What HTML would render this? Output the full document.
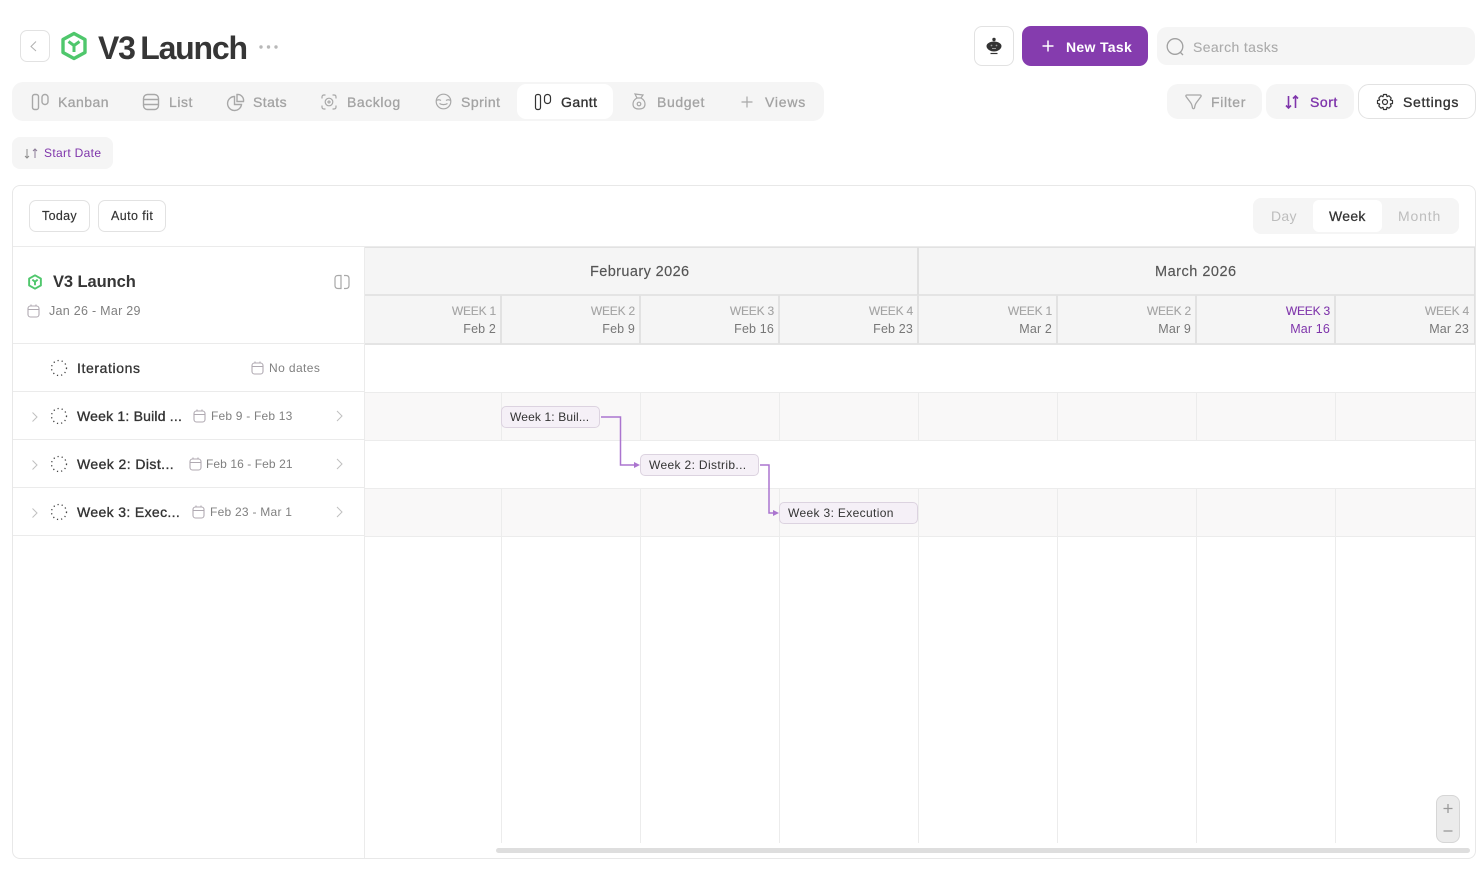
<!DOCTYPE html>
<html lang="en"><head><meta charset="utf-8"><title>V3 Launch</title>
<style>
*{box-sizing:border-box}
html,body{margin:0;padding:0;width:1484px;height:870px;overflow:hidden;background:#fff;font-family:"Liberation Sans",sans-serif;color:#333}
.a{position:absolute}
.t{position:absolute;white-space:nowrap;line-height:18px}
svg{position:absolute;overflow:visible;fill:none}
.tab{font-size:14px;color:#a3a3a3;letter-spacing:.5px;-webkit-text-stroke:.3px currentColor}
.hw{font-size:12px;color:#a3a3a3;text-align:right;letter-spacing:-.2px;line-height:14px;-webkit-text-stroke:.1px currentColor}
.hd{font-size:12.5px;color:#777;text-align:right;letter-spacing:.15px;line-height:14px}
.row{font-size:14px;color:#333;letter-spacing:.4px;-webkit-text-stroke:.35px #333}
.dt{font-size:12px;color:#808080;letter-spacing:.2px}
.bar{position:absolute;height:22px;background:#f5f0f7;border:1px solid #dcd3e0;border-radius:5px;font-size:12px;line-height:20px;padding-left:8px;color:#333;letter-spacing:.35px;white-space:nowrap}
</style></head><body>

<!-- top header -->
<div class="a" style="left:20px;top:30px;width:30px;height:32px;border:1px solid #e2e2e2;border-radius:7px"></div>
<svg style="left:20px;top:30px" width="30" height="32" stroke="#b0b0b0" stroke-width="1"><path d="M16 11.500L11 16.500L16 21"/></svg>
<svg style="left:60px;top:31px" width="28" height="30" viewBox="0 0 28 30" stroke="#4fc76c" stroke-width="3.400" stroke-linejoin="round"><path d="M14 2.500L25 8.500V21.500L14 27.500L3 21.500V8.500Z"/><path d="M8.500 10.500L14 14.500L19.500 10.500M14 14.500V21" stroke-width="3"/></svg>
<div class="t" style="left:98px;top:29px;font-size:32px;line-height:38px;font-weight:bold;letter-spacing:-1.200px;word-spacing:-2.200px;color:#363636">V3 Launch</div>
<svg style="left:259px;top:44px" width="20" height="6"><circle cx="2" cy="3" r="1.700" fill="#b8b8b8"/><circle cx="9.500" cy="3" r="1.700" fill="#b8b8b8"/><circle cx="17" cy="3" r="1.700" fill="#b8b8b8"/></svg>

<div class="a" style="left:974px;top:26px;width:40px;height:40px;border:1px solid #e2e2e2;border-radius:8px"></div>
<svg style="left:984px;top:36px" width="20" height="20" viewBox="0 0 20 20"><circle cx="10" cy="3.500" r="1.700" fill="#333"/><path d="M2.500 10C2.500 7.500 6 5.500 10 5.500s7.500 2 7.500 4.500c0 3-3.500 5.500-7.500 5.500S2.500 13 2.500 10z" fill="#333"/><circle cx="7.500" cy="9.500" r=".9" fill="#999"/><circle cx="12.500" cy="9.500" r=".9" fill="#999"/><path d="M8 12.500h4" stroke="#999" stroke-width="1"/><path d="M6.500 17.500h7" stroke="#333" stroke-width="1.200"/></svg>
<div class="a" style="left:1022px;top:26px;width:126px;height:40px;background:#853cae;border-radius:9px"></div>
<svg style="left:1041px;top:39px" width="14" height="14" stroke="#fff" stroke-width="1.500"><path d="M7 1.500V12.500M1.500 7H12.500"/></svg>
<div class="t" style="left:1066px;top:38px;font-size:14px;font-weight:bold;color:#fff;letter-spacing:.32px">New Task</div>
<div class="a" style="left:1157px;top:27px;width:318px;height:38px;background:#f5f5f5;border-radius:10px"></div>
<svg style="left:1165px;top:37px" width="20" height="20" stroke="#a0a0a0" stroke-width="1.300"><circle cx="10" cy="9.500" r="7.800"/><path d="M15.500 15.500L18 18"/></svg>
<div class="t" style="left:1193px;top:38px;font-size:14px;color:#ababab;letter-spacing:.38px;-webkit-text-stroke:.1px #ababab">Search tasks</div>

<!-- tabs -->
<div class="a" style="left:12px;top:82px;width:812px;height:39px;background:#f5f5f5;border-radius:11px"></div>
<div class="a" style="left:517px;top:84px;width:96px;height:35px;background:#fff;border-radius:9px"></div>
<svg style="left:31px;top:93px" width="18" height="17" stroke="#a8a8a8" stroke-width="1.400"><rect x="1.500" y="1.500" width="6" height="15" rx="2"/><rect x="11" y="1.500" width="6" height="10" rx="2.800"/></svg>
<div class="t tab" style="left:58px;top:93px;letter-spacing:.45px">Kanban</div>
<svg style="left:142px;top:93px" width="18" height="17" stroke="#a8a8a8" stroke-width="1.400"><rect x="1.500" y="1.500" width="15" height="15" rx="4"/><path d="M1.500 6.500H16.500M1.500 11.500H16.500"/></svg>
<div class="t tab" style="left:169px;top:93px;letter-spacing:.55px">List</div>
<svg style="left:227px;top:93px" width="18" height="17" stroke="#a8a8a8" stroke-width="1.400"><path d="M7.500 3.500A7 7 0 1 0 14.500 11.500H7.500Z"/><path d="M10 1.500A6 6 0 0 1 16.500 8.500H10Z"/></svg>
<div class="t tab" style="left:253px;top:93px;letter-spacing:.42px">Stats</div>
<svg style="left:321px;top:94px" width="16" height="16" stroke="#a8a8a8" stroke-width="1.200"><path d="M1 4.500V3Q1 1 3 1H4.500M11.500 1H13Q15 1 15 3V4.500M15 11.500V13Q15 15 13 15H11.500M4.500 15H3Q1 15 1 13V11.500"/><circle cx="8" cy="8" r="3.800"/><path d="M6.200 8H9.800M8 6.200V9.800"/></svg>
<div class="t tab" style="left:347px;top:93px;letter-spacing:.55px">Backlog</div>
<svg style="left:435px;top:93px" width="17" height="17" stroke="#a8a8a8" stroke-width="1.200"><circle cx="8.500" cy="8.500" r="7.300"/><path d="M1.500 7.500C3 6.500 4.500 6.500 6 7.500M11 7.500C12.500 6.500 14 6.500 15.500 7.500M4.500 10.500C6.500 12 10.500 12 12.500 10.500"/></svg>
<div class="t tab" style="left:461px;top:93px">Sprint</div>
<svg style="left:534px;top:93px" width="18" height="17" stroke="#333" stroke-width="1.200"><rect x="1.500" y="1.500" width="5" height="15" rx="2"/><rect x="10.500" y="1.500" width="6" height="9" rx="2.800"/></svg>
<div class="t tab" style="left:561px;top:93px;color:#333;letter-spacing:.45px;-webkit-text-stroke:.35px #333">Gantt</div>
<svg style="left:632px;top:93px" width="14" height="17" stroke="#a8a8a8" stroke-width="1.200"><path d="M3 1L11 2L9 5H5Z"/><path d="M5 5C1.500 7 1 9 1 11C1 14.500 3.500 16 7 16S13 14.500 13 11C13 9 12.500 7 9 5"/><circle cx="7" cy="11" r="1.800"/></svg>
<div class="t tab" style="left:657px;top:93px;letter-spacing:.6px">Budget</div>
<svg style="left:740px;top:95px" width="14" height="14" stroke="#a8a8a8" stroke-width="1.200"><path d="M7 1.500V12.500M1.500 7H12.500"/></svg>
<div class="t tab" style="left:765px;top:93px;letter-spacing:.8px">Views</div>

<div class="a" style="left:1167px;top:84px;width:95px;height:35px;background:#f5f5f5;border-radius:11px"></div>
<svg style="left:1185px;top:94px" width="17" height="16" stroke="#a8a8a8" stroke-width="1.300" stroke-linejoin="round"><path d="M2 1H15Q16.500 1 16 2.500L11.500 8.500Q10 10.500 9.500 14Q8.500 15.500 7.500 14Q7 10.500 5.500 8.500L1 2.500Q.5 1 2 1Z"/></svg>
<div class="t tab" style="left:1211px;top:93px;letter-spacing:.65px">Filter</div>
<div class="a" style="left:1266px;top:84px;width:88px;height:35px;background:#f5f5f5;border-radius:11px"></div>
<svg style="left:1285px;top:95px" width="14" height="14" stroke="#7f35ab" stroke-width="1.600"><path d="M3.500 1V13M1 10.500L3.500 13L6 10.500M10.500 13V1M8 3.500L10.500 1L13 3.500"/></svg>
<div class="t tab" style="left:1310px;top:93px;color:#7f35ab;letter-spacing:.55px;-webkit-text-stroke:.35px #7f35ab">Sort</div>
<div class="a" style="left:1358px;top:84px;width:118px;height:35px;border:1px solid #e2e2e2;border-radius:11px"></div>
<svg style="left:1376px;top:93px" width="18" height="18" viewBox="0 0 18 18" stroke="#333" stroke-width="1.200" stroke-linejoin="round"><circle cx="9" cy="9" r="2.500"/><path d="M7.500 1.500H10.500L11 3.700L13 2.800L15.200 5L14.300 7L16.500 7.500V10.500L14.300 11L15.200 13L13 15.200L11 14.300L10.500 16.500H7.500L7 14.300L5 15.200L2.800 13L3.700 11L1.500 10.500V7.500L3.700 7L2.800 5L5 2.800L7 3.700Z"/></svg>
<div class="t tab" style="left:1403px;top:93px;color:#333;letter-spacing:.68px;-webkit-text-stroke:.35px #333">Settings</div>

<!-- sort chip -->
<div class="a" style="left:12px;top:137px;width:101px;height:32px;background:#f5f5f5;border-radius:8px"></div>
<svg style="left:24px;top:148px" width="14" height="11" stroke="#8a8a8a" stroke-width="1"><path d="M3 1V10M1 8L3 10L5 8"/><path d="M11 10V1M9 3L11 1L13 3" stroke="#8a7a96"/></svg>
<div class="t" style="left:44px;top:144px;font-size:12px;color:#7f35ab;letter-spacing:.33px">Start Date</div>

<!-- main panel -->
<div class="a" style="left:12px;top:185px;width:1464px;height:674px;border:1px solid #e8e8e8;border-radius:8px"></div>
<div class="a" style="left:29px;top:200px;width:61px;height:32px;border:1px solid #e2e2e2;border-radius:7px"></div>
<div class="t" style="left:42px;top:207px;font-size:12.500px;color:#333;letter-spacing:.32px;-webkit-text-stroke:.15px #333">Today</div>
<div class="a" style="left:98px;top:200px;width:68px;height:32px;border:1px solid #e2e2e2;border-radius:7px"></div>
<div class="t" style="left:111px;top:207px;font-size:12.500px;color:#333;letter-spacing:.42px;-webkit-text-stroke:.15px #333">Auto fit</div>
<div class="a" style="left:1253px;top:198px;width:206px;height:36px;background:#f5f5f5;border-radius:8px"></div>
<div class="a" style="left:1313px;top:200px;width:69px;height:32px;background:#fff;border-radius:6px"></div>
<div class="t" style="left:1271px;top:207px;font-size:14px;color:#bdbdbd;letter-spacing:.3px">Day</div>
<div class="t" style="left:1329px;top:207px;font-size:14px;color:#333;letter-spacing:.3px;-webkit-text-stroke:.25px #333">Week</div>
<div class="t" style="left:1398px;top:207px;font-size:14px;color:#bdbdbd;letter-spacing:.85px">Month</div>

<div class="a" style="left:13px;top:246px;width:1462px;height:1px;background:#ebebeb"></div>

<!-- left column -->
<div class="a" style="left:364px;top:247px;width:1px;height:611px;background:#ebebeb"></div>
<svg style="left:27px;top:274px" width="16" height="16" viewBox="0 0 28 30" stroke="#4fc76c" stroke-width="3.600" stroke-linejoin="round"><path d="M14 2.500L25 8.500V21.500L14 27.500L3 21.500V8.500Z"/><path d="M9 10.500L14 14.500L19 10.500M14 14.500V21"/></svg>
<div class="t" style="left:53px;top:273px;font-size:16.500px;font-weight:bold;color:#363636;letter-spacing:-.08px">V3 Launch</div>
<svg style="left:334px;top:274px" width="16" height="16" stroke="#a8a8a8" stroke-width="1.200"><path d="M7 1.500H4Q1 1.500 1 4.500V11.500Q1 14.500 4 14.500H7ZM10 1.500H12Q15 1.500 15 4.500V11.500Q15 14.500 12 14.500H10"/></svg>
<svg style="left:27px;top:304px" width="13" height="14" stroke="#b0aab2" stroke-width="1.100"><rect x="1" y="2" width="11" height="11" rx="2.500"/><path d="M1 5.500H12M4 .5V2.500M9 .5V2.500"/></svg>
<div class="t" style="left:49px;top:302px;font-size:12.500px;color:#808080;letter-spacing:.28px">Jan 26 - Mar 29</div>
<div class="a" style="left:13px;top:343px;width:351px;height:1px;background:#ebebeb"></div>

<svg style="left:50px;top:359px" width="18" height="18" stroke="#444" stroke-width="1.300" stroke-dasharray="1.200 3"><circle cx="9" cy="9" r="7.500"/></svg>
<div class="t row" style="left:77px;top:359px;letter-spacing:.6px;-webkit-text-stroke:.3px #333">Iterations</div>
<svg style="left:251px;top:361px" width="13" height="14" stroke="#b0aab2" stroke-width="1.100"><rect x="1" y="2" width="11" height="11" rx="2.500"/><path d="M1 5.500H12M4 .5V2.500M9 .5V2.500"/></svg>
<div class="t dt" style="left:269px;top:359px;letter-spacing:.4px">No dates</div>
<div class="a" style="left:13px;top:391px;width:351px;height:1px;background:#ebebeb"></div>

<svg style="left:30px;top:411px" width="10" height="12" stroke="#c0c0c0" stroke-width="1"><path d="M2.500 1.500L7 6L2.500 10.500"/></svg>
<svg style="left:50px;top:407px" width="18" height="18" stroke="#444" stroke-width="1.300" stroke-dasharray="1.200 3"><circle cx="9" cy="9" r="7.500"/></svg>
<div class="t row" style="left:77px;top:407px;letter-spacing:.2px">Week 1: Build ...</div>
<svg style="left:193px;top:409px" width="13" height="14" stroke="#b0aab2" stroke-width="1.100"><rect x="1" y="2" width="11" height="11" rx="2.500"/><path d="M1 5.500H12M4 .5V2.500M9 .5V2.500"/></svg>
<div class="t dt" style="left:211px;top:407px">Feb 9 - Feb 13</div>
<svg style="left:335px;top:410px" width="10" height="12" stroke="#c0c0c0" stroke-width="1"><path d="M2 1L7 6L2 11"/></svg>
<div class="a" style="left:13px;top:439px;width:351px;height:1px;background:#ebebeb"></div>

<svg style="left:30px;top:459px" width="10" height="12" stroke="#c0c0c0" stroke-width="1"><path d="M2.500 1.500L7 6L2.500 10.500"/></svg>
<svg style="left:50px;top:455px" width="18" height="18" stroke="#444" stroke-width="1.300" stroke-dasharray="1.200 3"><circle cx="9" cy="9" r="7.500"/></svg>
<div class="t row" style="left:77px;top:455px;letter-spacing:.42px">Week 2: Dist...</div>
<svg style="left:189px;top:457px" width="13" height="14" stroke="#b0aab2" stroke-width="1.100"><rect x="1" y="2" width="11" height="11" rx="2.500"/><path d="M1 5.500H12M4 .5V2.500M9 .5V2.500"/></svg>
<div class="t dt" style="left:206px;top:455px;letter-spacing:.08px">Feb 16 - Feb 21</div>
<svg style="left:335px;top:458px" width="10" height="12" stroke="#c0c0c0" stroke-width="1"><path d="M2 1L7 6L2 11"/></svg>
<div class="a" style="left:13px;top:487px;width:351px;height:1px;background:#ebebeb"></div>

<svg style="left:30px;top:507px" width="10" height="12" stroke="#c0c0c0" stroke-width="1"><path d="M2.500 1.500L7 6L2.500 10.500"/></svg>
<svg style="left:50px;top:503px" width="18" height="18" stroke="#444" stroke-width="1.300" stroke-dasharray="1.200 3"><circle cx="9" cy="9" r="7.500"/></svg>
<div class="t row" style="left:77px;top:503px;letter-spacing:.36px">Week 3: Exec...</div>
<svg style="left:192px;top:505px" width="13" height="14" stroke="#b0aab2" stroke-width="1.100"><rect x="1" y="2" width="11" height="11" rx="2.500"/><path d="M1 5.500H12M4 .5V2.500M9 .5V2.500"/></svg>
<div class="t dt" style="left:210px;top:503px;letter-spacing:.25px">Feb 23 - Mar 1</div>
<svg style="left:335px;top:506px" width="10" height="12" stroke="#c0c0c0" stroke-width="1"><path d="M2 1L7 6L2 11"/></svg>
<div class="a" style="left:13px;top:535px;width:351px;height:1px;background:#ebebeb"></div>

<!-- timeline header -->
<div class="a" style="left:365px;top:247px;width:1110px;height:97px;background:#f5f5f5"></div>
<div class="a" style="left:365px;top:247px;width:1110px;height:1px;background:#e2e2e2"></div>
<div class="a" style="left:365px;top:294px;width:1110px;height:1.500px;background:#e4e4e4"></div>
<div class="a" style="left:365px;top:343px;width:1110px;height:1.500px;background:#e4e4e4"></div>
<div class="a" style="left:917px;top:247px;width:1.500px;height:48px;background:#e0e0e0"></div>
<div class="a" style="left:1474px;top:247px;width:1px;height:97px;background:#e0e0e0"></div>
<div class="a" style="left:500px;top:295px;width:2px;height:49px;background:#e2e2e2"></div>
<div class="a" style="left:639px;top:295px;width:2px;height:49px;background:#e2e2e2"></div>
<div class="a" style="left:778px;top:295px;width:2px;height:49px;background:#e2e2e2"></div>
<div class="a" style="left:917px;top:295px;width:2px;height:49px;background:#e2e2e2"></div>
<div class="a" style="left:1056px;top:295px;width:2px;height:49px;background:#e2e2e2"></div>
<div class="a" style="left:1195px;top:295px;width:2px;height:49px;background:#e2e2e2"></div>
<div class="a" style="left:1334px;top:295px;width:2px;height:49px;background:#e2e2e2"></div>

<div class="t" style="left:590px;top:263px;font-size:14.500px;color:#555;letter-spacing:.4px;-webkit-text-stroke:.15px #555">February 2026</div>
<div class="t" style="left:1155px;top:263px;font-size:14.500px;color:#555;letter-spacing:.5px;-webkit-text-stroke:.15px #555">March 2026</div>

<div class="t hw" style="left:396px;width:100px;top:304px">WEEK 1</div><div class="t hd" style="left:396px;width:100px;top:322px">Feb 2</div>
<div class="t hw" style="left:535px;width:100px;top:304px">WEEK 2</div><div class="t hd" style="left:535px;width:100px;top:322px">Feb 9</div>
<div class="t hw" style="left:674px;width:100px;top:304px">WEEK 3</div><div class="t hd" style="left:674px;width:100px;top:322px">Feb 16</div>
<div class="t hw" style="left:813px;width:100px;top:304px">WEEK 4</div><div class="t hd" style="left:813px;width:100px;top:322px">Feb 23</div>
<div class="t hw" style="left:952px;width:100px;top:304px">WEEK 1</div><div class="t hd" style="left:952px;width:100px;top:322px">Mar 2</div>
<div class="t hw" style="left:1091px;width:100px;top:304px">WEEK 2</div><div class="t hd" style="left:1091px;width:100px;top:322px">Mar 9</div>
<div class="t hw" style="left:1230px;width:100px;top:304px;color:#7f35ab">WEEK 3</div><div class="t hd" style="left:1230px;width:100px;top:322px;color:#7f35ab">Mar 16</div>
<div class="t hw" style="left:1369px;width:100px;top:304px">WEEK 4</div><div class="t hd" style="left:1369px;width:100px;top:322px">Mar 23</div>

<!-- grid -->
<div class="a" style="left:365px;top:392px;width:1110px;height:48px;background:#f9f8f8"></div>
<div class="a" style="left:365px;top:488px;width:1110px;height:48px;background:#f9f8f8"></div>
<div class="a" style="left:365px;top:391.500px;width:1110px;height:1px;background:#ececec"></div>
<div class="a" style="left:365px;top:440px;width:1110px;height:1px;background:#ececec"></div>
<div class="a" style="left:365px;top:488px;width:1110px;height:1px;background:#ececec"></div>
<div class="a" style="left:365px;top:536px;width:1110px;height:1px;background:#ececec"></div>
<svg style="left:0;top:0" width="1484" height="870" stroke="#ececec" stroke-width="1"><path d="M501.500 392V440M640.500 392V440M779.500 392V440M918.500 392V440M1057.500 392V440M1196.500 392V440M1335.500 392V440M501.500 488V843M640.500 488V843M779.500 488V843M918.500 488V843M1057.500 488V843M1196.500 488V843M1335.500 488V843"/></svg>

<!-- bars -->
<svg style="left:0;top:0" width="1484" height="870" stroke="#ab75cf" stroke-width="1.500"><path d="M601 417H620.500V465H635M760 465H769V513H774"/><path d="M634 462L640 465L634 468Z" fill="#ab75cf" stroke="none"/><path d="M773 510L779 513L773 516Z" fill="#ab75cf" stroke="none"/></svg>
<div class="bar" style="left:501px;top:406px;width:99px;letter-spacing:.14px">Week 1: Buil...</div>
<div class="bar" style="left:640px;top:454px;width:119px">Week 2: Distrib...</div>
<div class="bar" style="left:779px;top:502px;width:139px">Week 3: Execution</div>

<!-- zoom + scrollbar -->
<div class="a" style="left:496px;top:848px;width:974px;height:5px;background:#dedede;border-radius:3px"></div>
<div class="a" style="left:1436px;top:795px;width:24px;height:48px;background:#ebebeb;border:1px solid #d6d6d6;border-radius:8px"></div>
<svg style="left:1436px;top:795px" width="24" height="48" stroke="#9a9a9a" stroke-width="1.300"><path d="M12 9V18M7.500 13.500H16.500"/><path d="M7.500 36H16.500"/></svg>
</body></html>
